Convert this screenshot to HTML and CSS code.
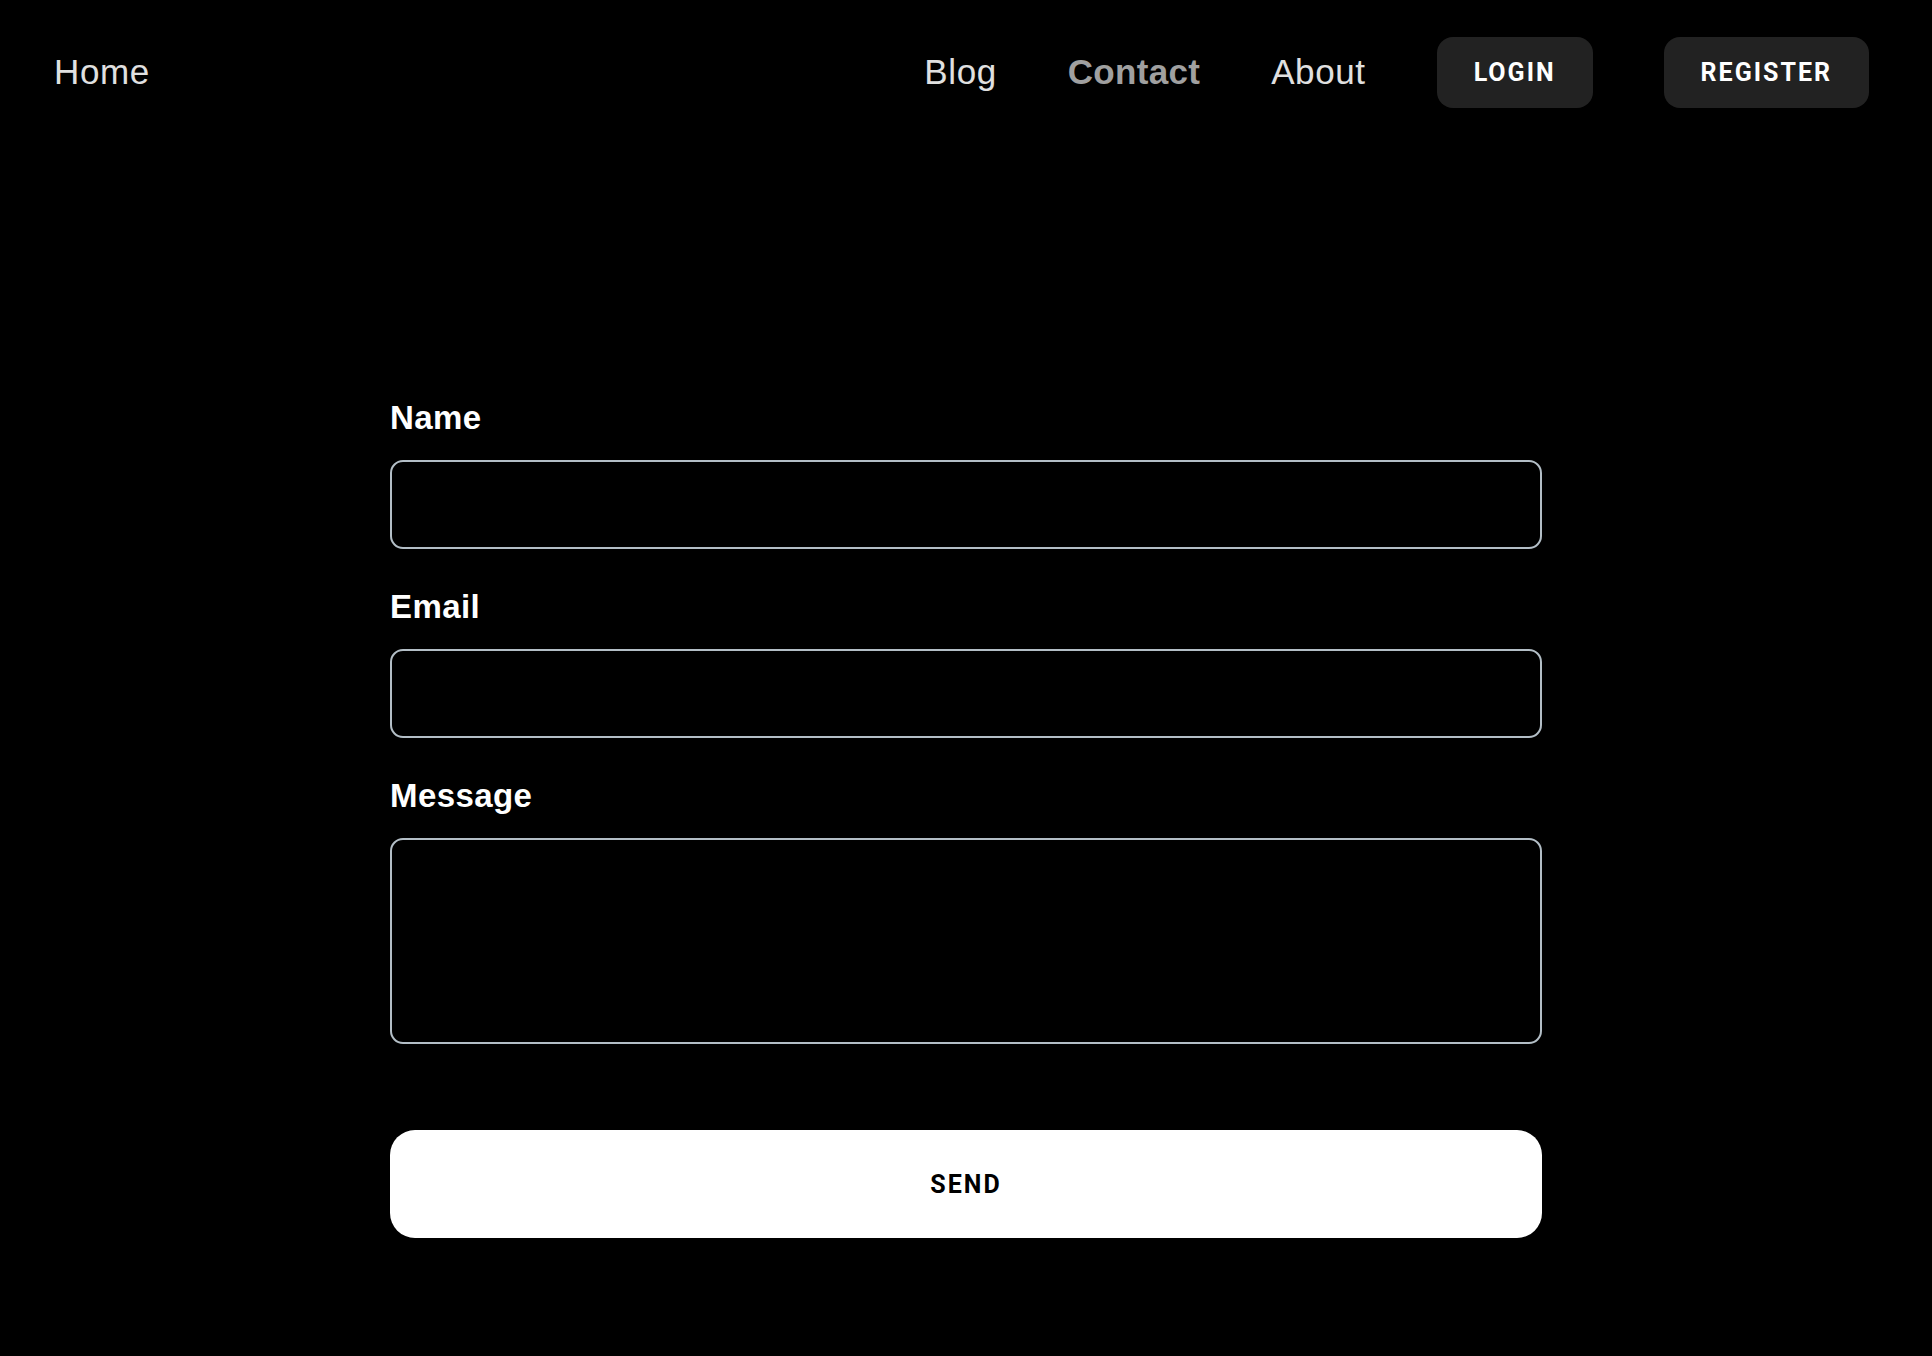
FILE: index.html
```html
<!DOCTYPE html>
<html lang="en">
<head>
<meta charset="utf-8">
<title>Contact</title>
<link rel="stylesheet" href="styles.css">
</head>
<body>
<header class="topbar">
  <a class="nav-link" href="#">Home</a>
  <nav class="nav-right">
    <a class="nav-link" href="#">Blog</a>
    <a class="nav-link active" href="#">Contact</a>
    <a class="nav-link" href="#">About</a>
    <button class="nav-btn" type="button">Login</button>
    <button class="nav-btn" type="button">Register</button>
  </nav>
</header>
<main class="main">
  <form class="contact-form">
    <label class="field-label" for="name">Name</label>
    <input class="field-input" id="name" type="text">
    <label class="field-label" for="email">Email</label>
    <input class="field-input" id="email" type="email">
    <label class="field-label" for="message">Message</label>
    <textarea class="field-input field-area" id="message"></textarea>
    <button class="send-btn" type="button">Send</button>
  </form>
</main>
</body>
</html>
```
FILE: styles.css
```css
* { box-sizing: border-box; }
html, body {
  margin: 0;
  padding: 0;
  background: #000;
  min-height: 100%;
}
body {
  font-family: "Liberation Sans", Arial, sans-serif;
  color: #fff;
}
.topbar {
  display: flex;
  align-items: center;
  justify-content: space-between;
  padding: 36px 63px 0 54px;
  height: 108px;
}
.nav-right {
  display: flex;
  align-items: center;
  gap: 71px;
}
.nav-link {
  font-size: 35px;
  letter-spacing: 0.6px;
  color: #e0e0e0;
  text-decoration: none;
  line-height: 1;
  margin-bottom: 2px;
}
.nav-link.active {
  color: #a0a0a0;
  font-weight: 700;
  letter-spacing: 0.3px;
}
.nav-btn {
  height: 71px;
  padding: 0 37px;
  border: none;
  border-radius: 16px;
  background: #222;
  color: #fff;
  font-family: Roboto, "Liberation Sans", sans-serif;
  font-weight: 700;
  font-size: 25px;
  letter-spacing: 2px;
  text-transform: uppercase;
  cursor: pointer;
}
.main {
  display: flex;
  justify-content: center;
  padding-top: 294px;
}
.contact-form {
  width: 1152px;
  display: flex;
  flex-direction: column;
}
.field-label {
  font-size: 33px;
  line-height: 32px;
  letter-spacing: 0.4px;
  font-weight: 700;
  color: #fff;
  margin-bottom: 26px;
}
.field-input {
  display: block;
  width: 100%;
  height: 89px;
  background: #000;
  border: 2px solid #b3bec6;
  border-radius: 13px;
  color: #fff;
  font-family: "Liberation Sans", Arial, sans-serif;
  font-size: 24px;
  padding: 0 20px;
  margin: 0 0 42px 0;
  outline: none;
}
.field-area {
  height: 206px;
  resize: none;
  padding: 20px;
  margin-bottom: 86px;
}
.send-btn {
  height: 108px;
  width: 100%;
  border: none;
  border-radius: 25px;
  background: #fff;
  color: #000;
  font-family: Roboto, "Liberation Sans", sans-serif;
  font-weight: 700;
  font-size: 25px;
  letter-spacing: 2px;
  text-transform: uppercase;
  cursor: pointer;
}
```
